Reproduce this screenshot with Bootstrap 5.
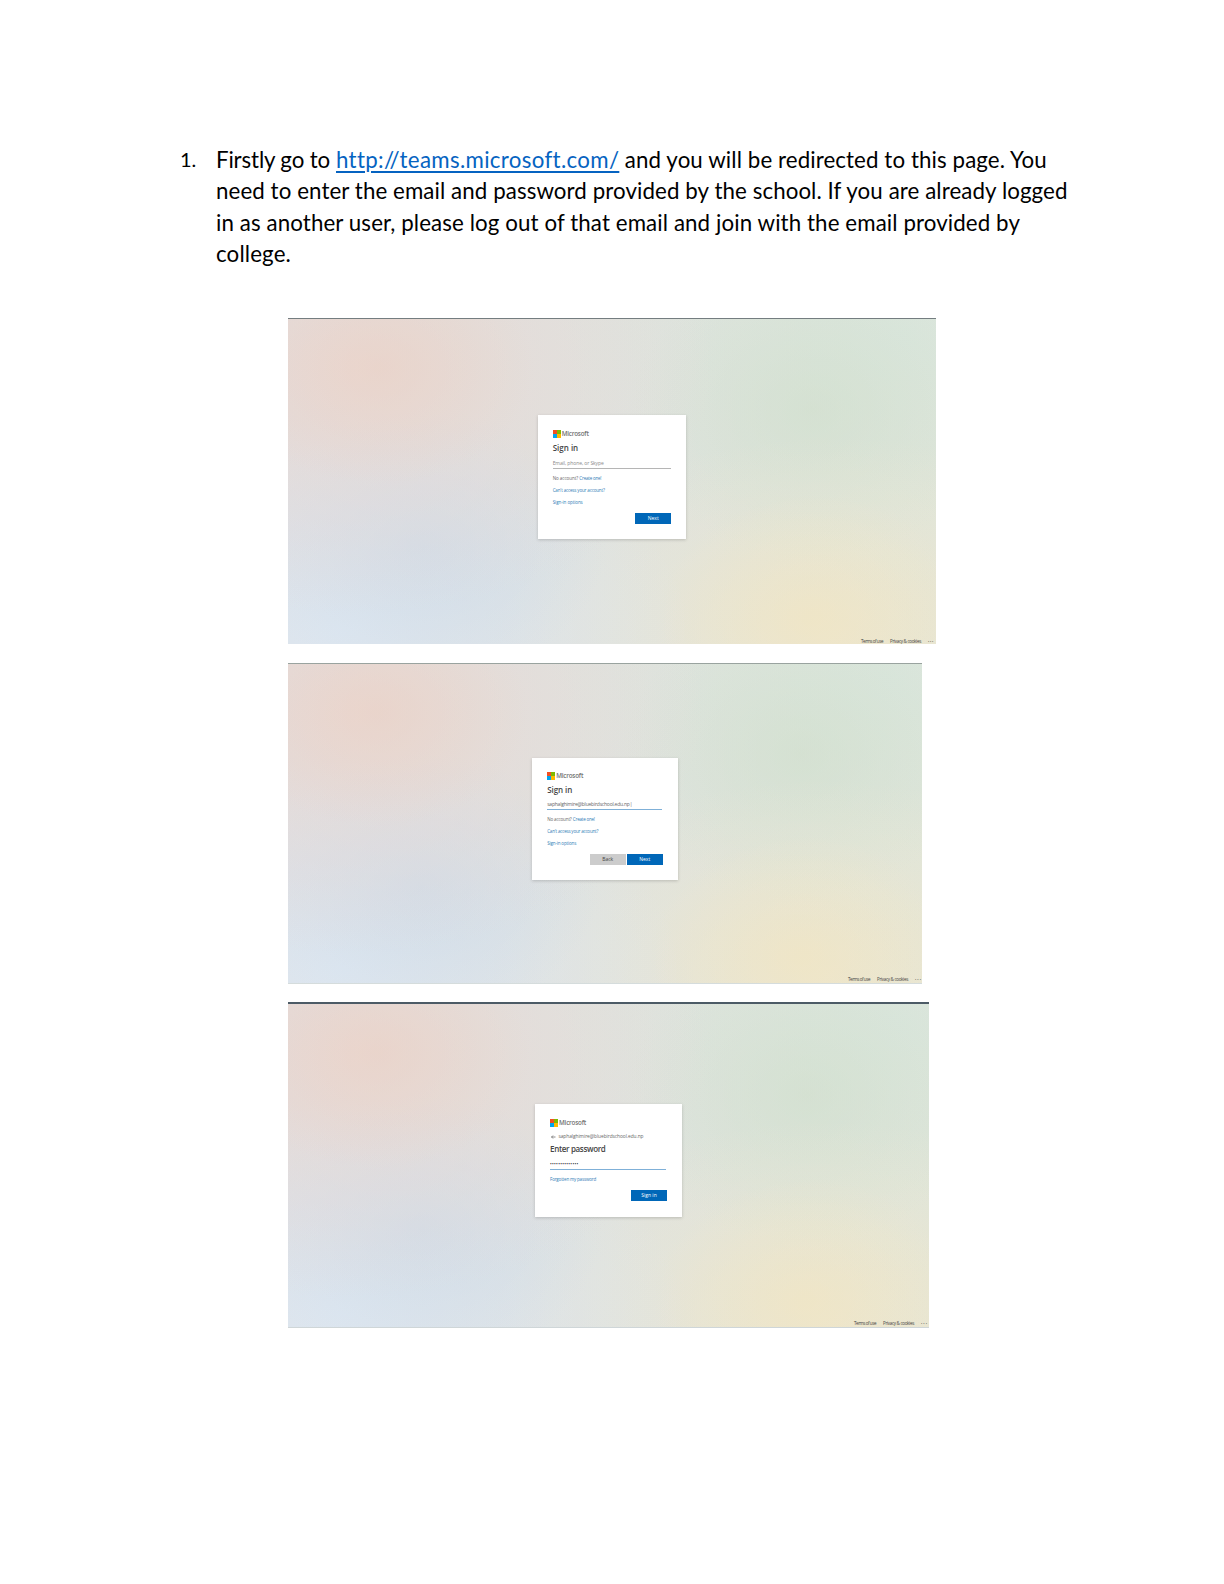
<!DOCTYPE html>
<html lang="en">
<head>
<meta charset="utf-8">
<title>Microsoft Teams sign-in guide</title>
<link href="https://cdn.jsdelivr.net/npm/bootstrap@5.3.0/dist/css/bootstrap.min.css" rel="stylesheet">
<style>
body{background:#fff;color:#000}
.sheet{width:1224px;height:1584px;padding:143.5px 0 0 180px;overflow:hidden}
.step{font:22.3px/31.5px Lato,Carlito,sans-serif;height:174.5px}
.step-no{width:36px;font-size:20px;flex:none}
.step-line{display:block;white-space:nowrap}
.step a{color:#0563c1;text-decoration:underline;text-decoration-thickness:1.5px;text-underline-offset:3px}
.fit{white-space:nowrap;display:inline-block}
.shots{margin-left:108px}
.shot{font-family:"Open Sans","Noto Sans",sans-serif;color:#666;
background:
radial-gradient(ellipse 24% 36% at 14% 15%,rgba(236,205,190,.45),rgba(236,205,190,0)),
radial-gradient(ellipse 56% 76% at 10% 15%,rgba(235,217,211,.75),rgba(235,217,211,0)),
radial-gradient(ellipse 28% 42% at 21% 70%,rgba(198,214,230,.5),rgba(198,214,230,0)),
radial-gradient(ellipse 54% 66% at 8% 96%,rgba(221,231,241,.95),rgba(221,231,241,0)),
radial-gradient(ellipse 24% 38% at 81% 92%,rgba(245,228,184,.45),rgba(245,228,184,0)),
radial-gradient(ellipse 52% 62% at 84% 98%,rgba(238,232,208,.75),rgba(238,232,208,0)),
radial-gradient(ellipse 28% 46% at 81% 28%,rgba(205,221,200,.5),rgba(205,221,200,0)),
radial-gradient(ellipse 54% 80% at 95% 5%,rgba(217,230,221,.9),rgba(217,230,221,0)),
linear-gradient(90deg,#dddddf,#dfe2df 50%,#e1e4d8)}
.shot-1{width:648px;height:326px;border-top:1px solid #747d80;padding-top:96px;margin-bottom:19px}
.shot-2{width:634px;height:321px;border-top:1px solid #99a39f;border-bottom:1px solid #d5dcdc;padding-top:94px;margin-bottom:18px}
.shot-3{width:641px;height:326px;border-top:2px solid #4c5b66;border-bottom:1px solid #cfd6d8;padding-top:100px}
.login{background:#fff;box-shadow:0 1px 3px rgba(0,0,0,.18);padding:14px 15px 0}
.shot-1 .login{width:148.5px;height:124px;margin-left:249.7px}
.shot-2 .login{width:145.5px;height:121.5px;margin-left:244.2px;padding-top:13px}
.shot-3 .login{width:147px;height:113px;margin-left:247px}
.brand{height:10px;gap:1px;font-size:6.3px;line-height:10px;color:#737373;font-weight:600}
.brand svg{width:8px;height:8px;flex:none}
.title{font-size:8px;line-height:18px;height:18.5px;font-weight:600;color:#444}
.field{font-size:5px;line-height:10px;height:11px;border-bottom:1px solid #b5b5b5;color:#8a8a8a;width:118px}
.field-on{border-color:#7fb0d8;color:#666;height:10.5px;line-height:9px;width:115px}
.hints{margin-top:3.5px;margin-bottom:5px}
.shot-2 .hints{margin-top:3px}
.hint{font-size:4.5px;line-height:12px;height:12px}
.hint a{color:#2f7cb6;text-decoration:none}
.btn-login{font-size:5px;line-height:11px;height:11px;width:36px;padding:0;border:0;border-radius:0;background:#0067b8;color:#fff}
.btn-back{background:#ccc;color:#444}
.actions{gap:1px}
.shot-3 .title{line-height:8px;height:9px}
.shot-3 .field{height:13px;line-height:14px;width:116px;margin-top:3px}
.shot-3 .hints{margin-top:2.5px;margin-bottom:5px}
.account{font-size:4.8px;line-height:17px;height:17px}
.account svg{width:4.5px;height:4px;margin:0 3px 0 1px;flex:none}
.dots{color:#222;font-size:4.6px}
.legal{font-size:4.5px;line-height:7px;gap:7px;color:#444}
.shot-1 .legal{margin-right:2px;line-height:5.5px}
.shot-3 .legal{margin-right:1px}
.more{font-weight:700}
</style>
<script src="https://cdn.jsdelivr.net/npm/bootstrap@5.3.0/dist/js/bootstrap.bundle.min.js"></script>
</head>
<body>
<svg class="d-none"><symbol id="ms" viewBox="0 0 21 21"><path fill="#f25022" d="M0 0h10.5v10.5H0z"/><path fill="#7fba00" d="M10.5 0H21v10.5H10.500z"/><path fill="#00a4ef" d="M0 10.500h10.500V21H0z"/><path fill="#ffb900" d="M10.500 10.500H21V21H10.500z"/></symbol></svg>
<main class="sheet">
  <section class="step d-flex">
    <div class="step-no"><span class="fit" data-w="16">1.</span></div>
    <div>
      <span class="step-line"><span class="fit" data-w="114">Firstly go to</span><span class="fit" data-w="6">&nbsp;</span><a href="#" class="fit" data-w="282">http://teams.microsoft.com/</a><span class="fit" data-w="5.500">&nbsp;</span><span class="fit" data-w="422">and you will be redirected to this page. You</span></span>
      <span class="step-line"><span class="fit" data-w="851.500">need to enter the email and password provided by the school. If you are already logged</span></span>
      <span class="step-line"><span class="fit" data-w="804">in as another user, please log out of that email and join with the email provided by</span></span>
      <span class="step-line"><span class="fit" data-w="75">college.</span></span>
    </div>
  </section>
  <section class="shots d-flex flex-column">
    <div class="shot shot-1 d-flex flex-column">
      <div class="login">
        <div class="brand d-flex align-items-center"><svg><use href="#ms"/></svg><span class="fit" data-w="27">Microsoft</span></div>
        <div class="title"><span class="fit" data-w="25.500">Sign in</span></div>
        <div class="field"><span class="fit" data-w="51">Email, phone, or Skype</span></div>
        <div class="hints">
          <div class="hint"><span class="fit" data-w="25.500">No account?</span> <a href="#" class="fit" data-w="22">Create one!</a></div>
          <div class="hint"><a href="#" class="fit" data-w="52">Can't access your account?</a></div>
          <div class="hint"><a href="#" class="fit" data-w="30">Sign-in options</a></div>
        </div>
        <div class="actions d-flex justify-content-end"><button class="btn btn-login">Next</button></div>
      </div>
      <div class="legal d-flex justify-content-end mt-auto"><span class="fit" data-w="22">Terms of use</span><span class="fit" data-w="31">Privacy &amp; cookies</span><span class="fit more" data-w="6">···</span></div>
    </div>
    <div class="shot shot-2 d-flex flex-column">
      <div class="login">
        <div class="brand d-flex align-items-center"><svg><use href="#ms"/></svg><span class="fit" data-w="27">Microsoft</span></div>
        <div class="title"><span class="fit" data-w="25">Sign in</span></div>
        <div class="field field-on"><span class="fit" data-w="85">saphalghimire@bluebirdschool.edu.np|</span></div>
        <div class="hints">
          <div class="hint"><span class="fit" data-w="24.500">No account?</span> <a href="#" class="fit" data-w="22">Create one!</a></div>
          <div class="hint"><a href="#" class="fit" data-w="51">Can't access your account?</a></div>
          <div class="hint"><a href="#" class="fit" data-w="29">Sign-in options</a></div>
        </div>
        <div class="actions d-flex justify-content-end"><button class="btn btn-login btn-back">Back</button><button class="btn btn-login">Next</button></div>
      </div>
      <div class="legal d-flex justify-content-end mt-auto"><span class="fit" data-w="22">Terms of use</span><span class="fit" data-w="31">Privacy &amp; cookies</span><span class="fit more" data-w="7">···</span></div>
    </div>
    <div class="shot shot-3 d-flex flex-column">
      <div class="login">
        <div class="brand d-flex align-items-center"><svg><use href="#ms"/></svg><span class="fit" data-w="27">Microsoft</span></div>
        <div class="account d-flex align-items-center"><svg viewBox="0 0 9 8" fill="none" stroke="#666" stroke-width="1.500"><path d="M9 4H1M4 1 1 4l3 3"/></svg><span class="fit" data-w="85">saphalghimire@bluebirdschool.edu.np</span></div>
        <div class="title"><span class="fit" data-w="55.500">Enter password</span></div>
        <div class="field field-on"><span class="fit dots" data-w="28.500">••••••••••••••</span></div>
        <div class="hints"><div class="hint"><a href="#" class="fit" data-w="46">Forgotten my password</a></div></div>
        <div class="actions d-flex justify-content-end"><button class="btn btn-login">Sign in</button></div>
      </div>
      <div class="legal d-flex justify-content-end mt-auto"><span class="fit" data-w="22">Terms of use</span><span class="fit" data-w="31">Privacy &amp; cookies</span><span class="fit more" data-w="7">···</span></div>
    </div>
  </section>
</main>
<script>
// Track each text run so that it fills its line width.
document.querySelectorAll('.fit').forEach(function (el) {
  var want = +el.dataset.w, have = el.getBoundingClientRect().width;
  el.style.letterSpacing = ((want - have) / el.textContent.length) + 'px';
});
</script>
</body>
</html>
